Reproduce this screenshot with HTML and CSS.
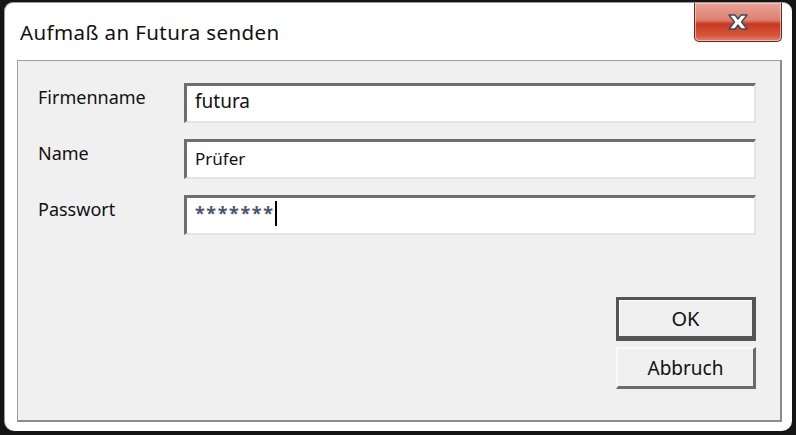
FILE: index.html
```html
<!DOCTYPE html>
<html lang="de">
<head>
<meta charset="UTF-8">
<title>Aufmaß an Futura senden</title>
<link rel="stylesheet" href="styles.css">
</head>
<body>
  <div class="window">
    <div class="titlebar">
      <span class="title">Aufmaß an Futura senden</span>
      <div class="close-btn">
        <svg width="26" height="18" viewBox="0 0 26 18">
          <path d="M4 2 L10 2 L13 6 L16 2 L22 2 L16.5 9 L22 16 L16 16 L13 12 L10 16 L4 16 L9.5 9 Z"
                fill="#fff" stroke="#3d4a5c" stroke-width="1.4" stroke-linejoin="round"/>
        </svg>
      </div>
    </div>
    <div class="panel">
      <div class="form-row">
        <label for="firma">Firmenname</label>
        <div class="field big">futura</div>
      </div>
      <div class="form-row">
        <label for="name">Name</label>
        <div class="field">Prüfer</div>
      </div>
      <div class="form-row">
        <label for="pw">Passwort</label>
        <div class="field pw">*******<span class="caret"></span></div>
      </div>
      <div class="buttons">
        <button class="default">OK</button>
        <button>Abbruch</button>
      </div>
    </div>
  </div>
</body>
</html>
```

FILE: styles.css
```css
body {
  margin: 0;
  padding: 0;
  background-color: #151515;
  font-family: "Noto Sans", "Open Sans", sans-serif;
  color: #111;
}
.window {
  box-sizing: border-box;
  width: 788px;
  height: 429px;
  margin: 2px 0 0 4px;
  background-color: #fff;
  border-radius: 9px 9px 10px 10px;
  border-left: 1px solid #9a9a9a;
  border-top: 1px solid #9a9a9a;
  display: flex;
  flex-direction: column;
}
.titlebar {
  height: 57px;
  display: flex;
  justify-content: space-between;
  align-items: flex-start;
}
.title {
  font-size: 20.5px;
  margin: 15px 0 0 15px;
  letter-spacing: 0.4px;
}
.close-btn {
  width: 86px;
  height: 38px;
  margin-right: 10px;
  border: 1px solid #5b2b24;
  border-top: none;
  border-radius: 0 0 5px 5px;
  background: linear-gradient(#e8a396 0%, #dd8070 45%, #c8391f 55%, #d4553c 85%, #e8826e 100%);
  box-shadow: inset 0 0 0 1px rgba(255, 220, 210, 0.6);
  display: flex;
  align-items: center;
  justify-content: center;
}
.panel {
  box-sizing: border-box;
  width: 765px;
  height: 362px;
  margin-left: 12px;
  background-color: #f0f0f0;
  border: 1px solid #a0a0a0;
  border-right: 2px solid #8c8c8c;
  border-bottom: 2px solid #8c8c8c;
  padding: 22px 24px 0 20px;
  display: flex;
  flex-direction: column;
}
.form-row {
  display: flex;
  align-items: flex-start;
  margin-bottom: 16px;
}
label {
  width: 146px;
  font-size: 18px;
  padding-top: 2px;
}
.field {
  box-sizing: border-box;
  flex: 1;
  height: 40px;
  background-color: #fff;
  border-top: 3px solid #6e6e6e;
  border-left: 3px solid #6e6e6e;
  border-right: 2px solid #e4e4e4;
  border-bottom: 2px solid #e4e4e4;
  padding: 5px 0 0 8px;
  font-size: 17px;
}
.field.big {
  font-size: 19px;
  padding-top: 2px;
}
.field.pw {
  font-size: 18px;
  font-weight: bold;
  color: #4a5670;
  letter-spacing: 1.6px;
  display: flex;
  align-items: flex-start;
  padding-top: 3px;
}
.caret {
  width: 2px;
  height: 25px;
  background-color: #000;
  margin-left: 0;
}
.buttons {
  margin-top: 46px;
  display: flex;
  flex-direction: column;
  align-items: flex-end;
  gap: 6px;
}
button {
  box-sizing: border-box;
  width: 140px;
  height: 42px;
  font-family: "Noto Sans", sans-serif;
  font-size: 19px;
  color: #111;
  background-color: #f0f0f0;
  border-top: 2px solid #fafafa;
  border-left: 2px solid #fafafa;
  border-right: 3px solid #6a6a6a;
  border-bottom: 3px solid #6a6a6a;
  padding: 0;
}
button.default {
  height: 44px;
  font-size: 20px;
  border: 3px solid #555;
  border-right-width: 4px;
  border-bottom-width: 5px;
  box-shadow: inset 1px 1px 0 #fff;
}
```
